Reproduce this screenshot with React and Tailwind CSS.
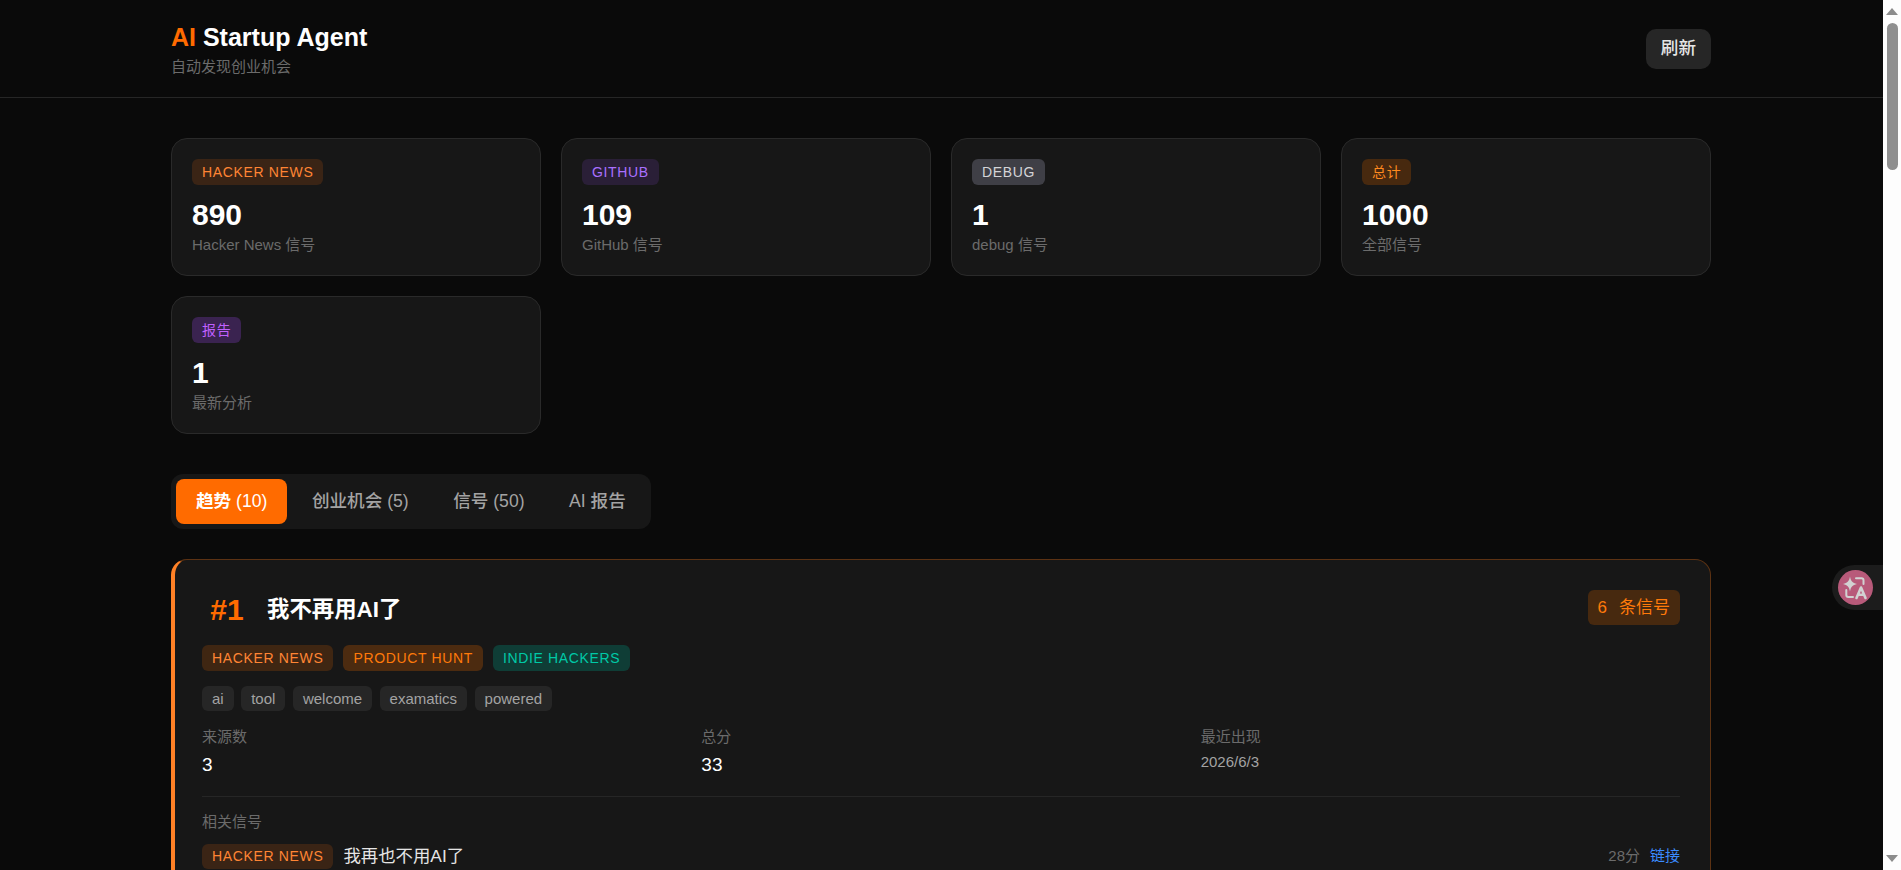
const CN = "font-['Liberation_Sans','Noto_Sans_CJK_SC',sans-serif]";

const Badge = ({ tone, short, children }) => (
  <span className={`inline-block rounded-md px-[10px] text-[14px] tracking-[0.65px] ${short ? "h-[25px] leading-[25px]" : "h-[26px] leading-[26px]"} ${tone}`}>
    {children}
  </span>
);

const stats = [
  { tag: "HACKER NEWS", tone: "bg-[#3a2415] text-[#ff8534]", value: "890", label: "Hacker News 信号" },
  { tag: "GITHUB", tone: "bg-[#2a1f37] text-[#a970ff]", value: "109", label: "GitHub 信号" },
  { tag: "DEBUG", tone: "bg-[#3f3f46] text-[#d4d4d8]", value: "1", label: "debug 信号" },
  { tag: "总计", tone: "bg-[#47290f] text-[#ff8a1f]", value: "1000", label: "全部信号" },
  { tag: "报告", tone: "bg-[#3a2350] text-[#c060ff]", value: "1", label: "最新分析" },
];

const StatCard = ({ tag, tone, value, label }) => (
  <div className="h-[138px] rounded-2xl border border-[#2a2a2a] bg-[#171717] px-[20px] pt-[20px]">
    <Badge tone={tone}>{tag}</Badge>
    <div className="mt-[12px] text-[30px] font-bold leading-[36px] text-white">{value}</div>
    <div className="mt-[2px] text-[15px] leading-[20px] text-[#6b6b6b]">{label}</div>
  </div>
);

const Metric = ({ label, children }) => (
  <div>
    <div className="text-[15px] leading-[20px] text-[#6b6b6b]">{label}</div>
    <div className="mt-[6px]">{children}</div>
  </div>
);

const TranslateIcon = () => (
  <svg viewBox="0 0 35 35" className="h-[35px] w-[35px]" fill="none" stroke="#d2d2d2" strokeWidth="2" strokeLinecap="round" strokeLinejoin="round">
    <path d="M12 6.5c.8 4.6 2.3 6.4 7 7.5-4.7 1.1-6.2 2.9-7 7.5-.8-4.6-2.3-6.4-7-7.5 4.7-1.1 6.2-2.9 7-7.5z" fill="#d2d2d2" stroke="none" />
    <path d="M18 8.3h5.5a2 2 0 0 1 2 2V14" />
    <path d="M8.3 20v5a2 2 0 0 0 2 2H15" />
    <path d="M18.5 28l4.5-10.5L27.5 28M20 24.8h6" strokeWidth="2.6" />
  </svg>
);

export default function App() {
  return (
    <div className={`flex h-screen overflow-hidden bg-[#0a0a0a] ${CN}`}>
      <div className="relative min-w-0 flex-1 overflow-hidden">
        <header className="h-[98px] border-b border-[#262626] pr-[1px]">
          <div className="mx-auto flex h-full max-w-[1600px] items-center justify-between px-[30px]">
            <div>
              <h1 className="text-[25px] font-bold leading-[34px] text-white">
                <span className="text-[#ff6b00]">AI</span> Startup Agent
              </h1>
              <p className="mt-[3px] text-[15px] leading-[20px] text-[#6b6b6b]">自动发现创业机会</p>
            </div>
            <button className="h-[40px] rounded-[10px] bg-[#262626] px-[15px] text-[17.6px] font-medium text-[#e5e5e5]">刷新</button>
          </div>
        </header>

        <div className="pr-[1px]">
          <main className="mx-auto max-w-[1600px] px-[30px] pt-[40px]">
            <div className="grid grid-cols-4 gap-[20px]">
              {stats.map((s) => (
                <StatCard key={s.label} {...s} />
              ))}
            </div>

            <div className="mt-[40px] inline-flex gap-[4.5px] rounded-xl bg-[#171717] p-[5px] align-top">
              <button className="h-[45px] rounded-lg bg-[#ff6b00] px-[20px] text-[17.6px] font-medium text-white">
                <span className="font-bold">趋势</span> (10)
              </button>
              <button className="h-[45px] rounded-lg px-[20px] text-[17.6px] font-medium text-[#a3a3a3]">创业机会 (5)</button>
              <button className="h-[45px] rounded-lg px-[20px] text-[17.6px] font-medium text-[#a3a3a3]">信号 (50)</button>
              <button className="h-[45px] rounded-lg px-[20px] text-[17.6px] font-medium text-[#a3a3a3]">AI 报告</button>
            </div>

            <section className="mt-[30px] h-[400px] rounded-2xl border border-l-4 border-[#5c3213] border-l-[#ff8126] bg-[#171717] pl-[27px] pr-[30px] pt-[30px]">
              <div className="flex items-start justify-between">
                <div className="flex h-[39px] items-center gap-[15px]">
                  <span className="w-[50px] text-center text-[30px] font-bold leading-[35px] text-[#ff6b00]">#1</span>
                  <h2 className="text-[22.4px] font-bold leading-[30px] text-white">我不再用AI了</h2>
                </div>
                <span className="h-[35px] rounded-md bg-[#47290f] px-[10px] text-[17px] leading-[35px] text-[#ff7a0a]">
                  <span className="mr-[12px]">6</span>条信号
                </span>
              </div>
              <div className="mt-[16px] flex gap-[10px]">
                <Badge tone="bg-[#3f2612] text-[#ff8534]">HACKER NEWS</Badge>
                <Badge tone="bg-[#4c2b10] text-[#ff7a0a]">PRODUCT HUNT</Badge>
                <Badge tone="bg-[#0f3d36] text-[#00c9a7]">INDIE HACKERS</Badge>
              </div>
              <div className="mt-[15px] flex gap-[7.5px]">
                {["ai", "tool", "welcome", "examatics", "powered"].map((t) => (
                  <span key={t} className="h-[25px] rounded-md bg-[#262626] px-[10px] text-[15px] leading-[25px] text-[#a3a3a3]">{t}</span>
                ))}
              </div>
              <div className="mt-[16px] grid grid-cols-3 gap-[20px]">
                <Metric label="来源数"><div className="text-[19px] leading-[24px] text-white">3</div></Metric>
                <Metric label="总分"><div className="text-[19px] leading-[24px] text-white">33</div></Metric>
                <Metric label="最近出现"><div className="text-[15px] leading-[18px] text-[#a3a3a3]">2026/6/3</div></Metric>
              </div>
              <div className="mt-[19px] border-t border-[#262626] pt-[15px]">
                <div className="text-[15px] leading-[20px] text-[#6b6b6b]">相关信号</div>
                <div className="mt-[11px] flex items-center justify-between">
                  <div className="flex items-center gap-[10px]">
                    <Badge short tone="bg-[#3a2415] text-[#ff8534]">HACKER NEWS</Badge>
                    <span className="text-[17.4px] text-[#e5e5e5]">我再也不用AI了</span>
                  </div>
                  <div className="flex items-center gap-[10px] text-[15px]">
                    <span className="text-[#6b6b6b]">28分</span>
                    <a className="text-[#3b8cff]">链接</a>
                  </div>
                </div>
              </div>
            </section>
          </main>
        </div>

        <div className="absolute right-0 top-[565px] flex h-[45px] w-[51px] items-center rounded-l-full bg-[#1c1c1c] pl-[6px]">
          <div className="h-[35px] w-[35px] rounded-full bg-[#b85a7a]">
            <TranslateIcon />
          </div>
        </div>
      </div>

      <div className="flex w-[18px] shrink-0 flex-col items-center bg-[#fdfdfd]">
        <div className="mt-[8px] h-0 w-0 border-x-[6.5px] border-b-[7px] border-x-transparent border-b-[#8c8c8c]" />
        <div className="mt-[8px] h-[147px] w-[11px] rounded-full bg-[#8f8f8f]" />
        <div className="mb-[8px] mt-auto h-0 w-0 border-x-[6.5px] border-t-[7px] border-x-transparent border-t-[#8c8c8c]" />
      </div>
    </div>
  );
}
